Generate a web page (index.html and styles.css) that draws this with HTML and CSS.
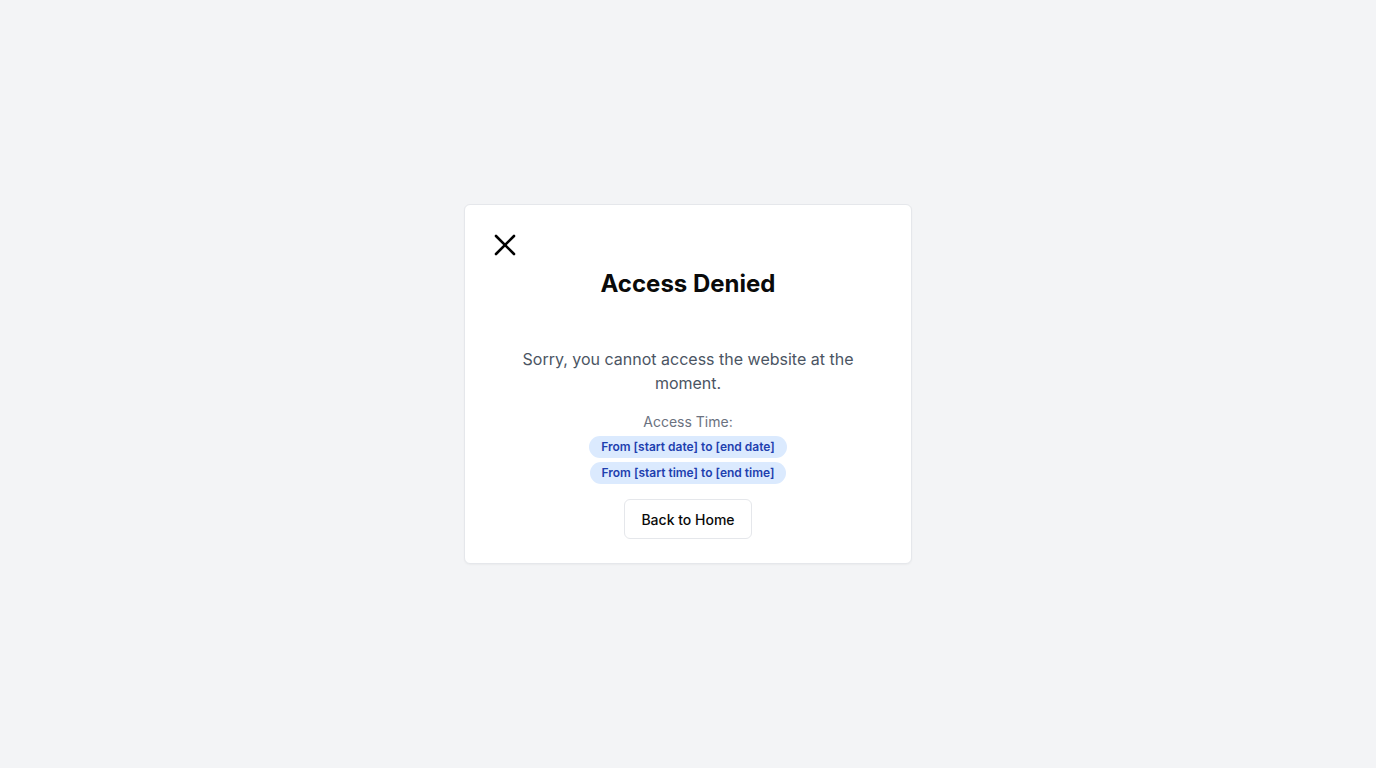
FILE: index.html
```html
<!DOCTYPE html>
<html lang="en">
<head>
<meta charset="utf-8">
<title>Access Denied</title>
<link rel="stylesheet" href="styles.css">
</head>
<body>
<main class="page">
  <section class="card">
    <button class="close" aria-label="Close">
      <svg width="32" height="32" viewBox="0 0 32 32" fill="none" stroke="#000" stroke-width="2.6" stroke-linecap="round">
        <path d="M7 7 L25 25"/>
        <path d="M25 7 L7 25"/>
      </svg>
    </button>
    <h1 class="title">Access Denied</h1>
    <p class="message">Sorry, you cannot access the website at the moment.</p>
    <div class="access">
      <div class="access-label">Access Time:</div>
      <span class="badge">From [start date] to [end date]</span>
      <span class="badge">From [start time] to [end time]</span>
    </div>
    <button class="home">Back to Home</button>
  </section>
</main>
</body>
</html>
```
FILE: styles.css
```css
* { box-sizing: border-box; }
html, body { margin: 0; height: 100%; }
body {
  background: #f3f4f6;
  font-family: Inter, "Liberation Sans", sans-serif;
  color: #111827;
}
.page {
  min-height: 100vh;
  display: flex;
  align-items: center;
  justify-content: center;
}
.card {
  width: 448px;
  background: #fff;
  border: 1px solid #e5e7eb;
  border-radius: 6px;
  box-shadow: 0 1px 2px rgba(0,0,0,0.04);
  padding: 24px 24px 24px;
  display: flex;
  flex-direction: column;
  align-items: center;
}
.close {
  align-self: flex-start;
  width: 32px;
  height: 32px;
  padding: 0;
  border: 0;
  background: none;
  display: block;
}
.close svg { display: block; }
.title {
  margin: 7px 0 0;
  font-size: 24px;
  line-height: 32px;
  font-weight: 700;
  color: #0a0a0a;
}
.message {
  margin: 47px 0 0;
  max-width: 360px;
  text-align: center;
  font-size: 16px;
  line-height: 24px;
  color: #4b5563;
}
.access {
  margin-top: 17px;
  display: flex;
  flex-direction: column;
  align-items: center;
  gap: 4px;
}
.access-label {
  font-size: 14px;
  line-height: 20px;
  color: #6b7280;
}
.badge {
  display: inline-block;
  background: #dbeafe;
  color: #1e40af;
  font-size: 12px;
  line-height: 16px;
  font-weight: 600;
  padding: 3px 12px;
  border-radius: 9999px;
}
.home {
  margin-top: 15px;
  height: 40px;
  padding: 0 16px;
  background: #fff;
  border: 1px solid #e5e7eb;
  border-radius: 6px;
  font-family: inherit;
  font-size: 14px;
  font-weight: 500;
  color: #0a0a0a;
}
```
